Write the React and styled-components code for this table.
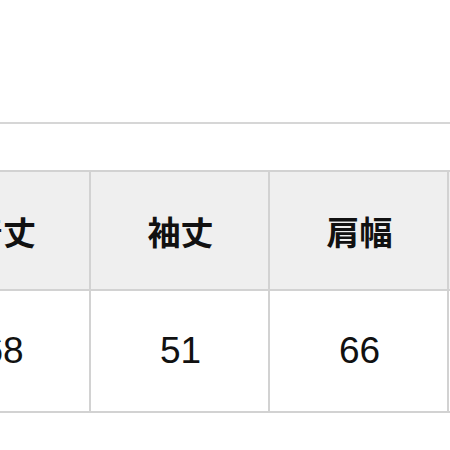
import React from 'react';
import styled, { createGlobalStyle } from 'styled-components';

const GlobalStyle = createGlobalStyle`
  html, body {
    margin: 0;
    padding: 0;
    background: #fff;
    overflow: hidden;
  }
  body {
    font-family: "Noto Sans CJK JP", "Noto Sans", sans-serif;
  }
`;

const Page = styled.div`
  width: 450px;
  height: 450px;
  overflow: hidden;
  padding-top: 122px;
  box-sizing: border-box;
`;

const Rule = styled.div`
  height: 2px;
  background: #d6d6d6;
`;

const Table = styled.table`
  width: 716px;
  min-width: 716px;
  margin-top: 46px;
  margin-left: -90px;
  border-collapse: collapse;
  table-layout: fixed;
`;

const HeadCell = styled.th`
  height: 117px;
  padding: 0 0 0 ${({ $nudge }) => $nudge || 0}px;
  border: 2px solid #d2d2d2;
  background: #efefef;
  color: #111;
  font-family: "Noto Sans CJK JP", sans-serif;
  font-weight: 700;
  font-size: 33px;
  text-align: center;
  vertical-align: middle;
`;

const Cell = styled.td`
  height: 120px;
  padding: 0 0 0 ${({ $nudge }) => $nudge || 0}px;
  border: 2px solid #d2d2d2;
  background: #fff;
  color: #111;
  font-family: "Liberation Sans", Arial, sans-serif;
  font-size: 37px;
  text-align: center;
  vertical-align: middle;
`;

const columns = [
  { key: 'length', label: '着丈', value: '68', nudge: 5 },
  { key: 'sleeve', label: '袖丈', value: '51', nudge: 2 },
  { key: 'shoulder', label: '肩幅', value: '66', nudge: 2 },
  { key: 'width', label: '', value: '' },
];

export default function App() {
  return (
    <Page>
      <GlobalStyle />
      <Rule />
      <Table>
        <colgroup>
          {columns.map((c) => (
            <col key={c.key} style={{ width: 179 }} />
          ))}
        </colgroup>
        <thead>
          <tr>
            {columns.map((c) => (
              <HeadCell key={c.key} $nudge={c.nudge}>{c.label}</HeadCell>
            ))}
          </tr>
        </thead>
        <tbody>
          <tr>
            {columns.map((c) => (
              <Cell key={c.key} $nudge={c.nudge}>{c.value}</Cell>
            ))}
          </tr>
        </tbody>
      </Table>
    </Page>
  );
}
